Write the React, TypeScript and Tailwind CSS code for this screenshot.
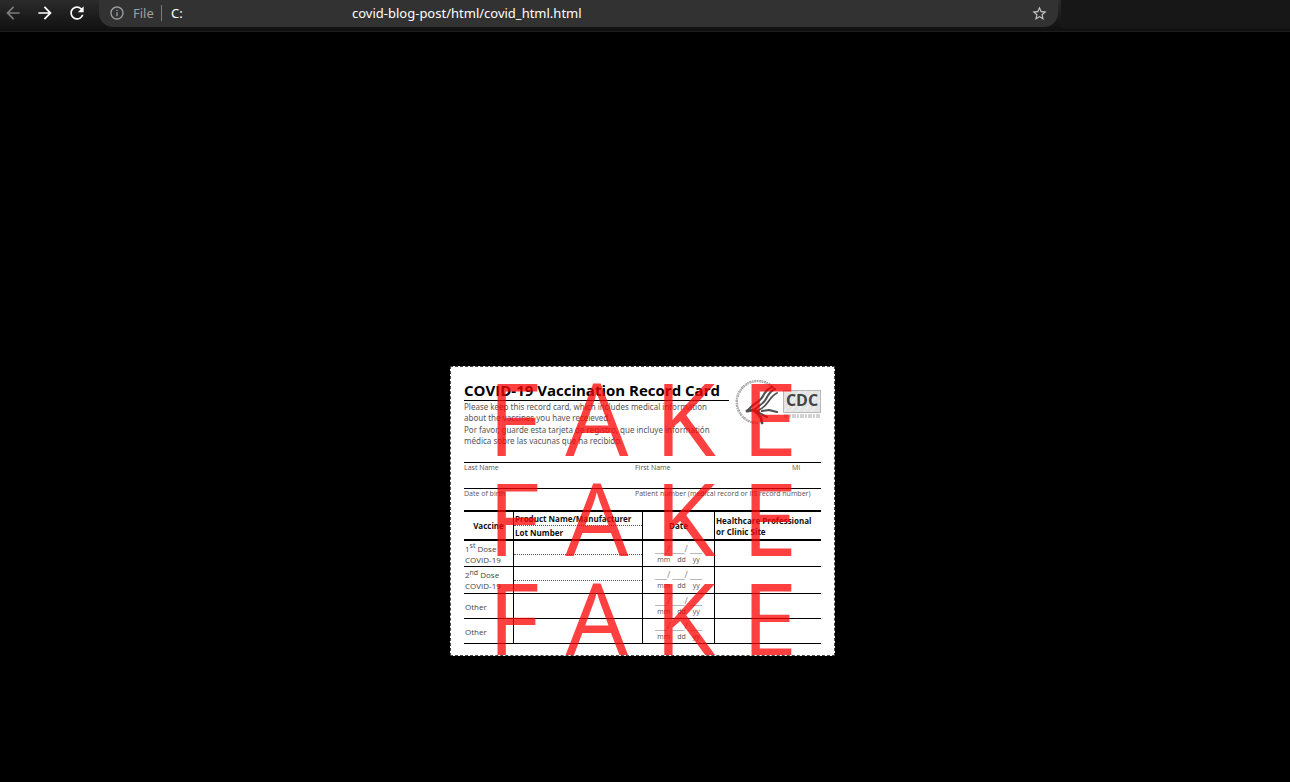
import React from "react";
import { MdArrowBack, MdArrowForward, MdRefresh, MdOutlineInfo, MdStarBorder } from "react-icons/md";

function Toolbar() {
  return (
    <header className="flex h-8 items-start border-b border-[#1c1c1c] bg-linear-to-b from-[#2b2b2b] to-[#101010]">
      <div className="flex h-[27px] w-[99px] shrink-0 items-center gap-3 pb-px pl-[3px]">
        <button type="button" aria-label="Back" className="text-[#7c7c7c]">
          <MdArrowBack size={20} />
        </button>
        <button type="button" aria-label="Forward" className="text-white">
          <MdArrowForward size={20} />
        </button>
        <button type="button" aria-label="Reload" className="text-white">
          <MdRefresh size={20} />
        </button>
      </div>
      <div className="flex h-[27px] flex-1 items-center rounded-b-[14px] bg-[#323232] px-2.5 pb-px font-['Noto_Sans',sans-serif] text-[13px] leading-5">
        <MdOutlineInfo size={16} className="text-[#9aa0a6]" />
        <span className="ml-2 w-6 text-[#9aa0a6]">File</span>
        <span className="mx-1 h-4 w-px bg-[#7c7c7c]" />
        <label htmlFor="address" className="ml-[5px] w-[181px] text-white">C:</label>
        <input
          id="address"
          type="text"
          defaultValue="covid-blog-post/html/covid_html.html"
          className="h-5 min-w-0 flex-1 bg-transparent text-white outline-none"
        />
        <button type="button" aria-label="Bookmark this page" className="text-[#c8c8c8]">
          <MdStarBorder size={17} />
        </button>
      </div>
      <div className="ml-[3px] h-[28px] w-[229px] shrink-0 bg-[#171717]" />
    </header>
  );
}

function AgencyLogo() {
  return (
    <svg viewBox="0 0 88 46" className="h-[46px] w-[88px] shrink-0" role="img" aria-label="CDC">
      <path d="M42 10A21 21 0 1 0 25 43" fill="none" stroke="#969696" strokeWidth="2.4" strokeDasharray="1.3 0.7 2 0.9" />
      <path d="M42 10A21 21 0 1 0 25 43" fill="none" stroke="#c8c8c8" strokeWidth="1" />
      <g fill="none" stroke="#505050" strokeLinecap="round" strokeLinejoin="round">
        <path d="M39 7C34 9 32 12 30 16S25 22 19 26L15 30" strokeWidth="2.2" />
        <path d="M42 9C37 11 35 15 33 19S27 25 22 29" strokeWidth="2" />
        <path d="M44 13C40 15 37 19 35 22S30 28 26 30" strokeWidth="1.8" />
        <path d="M14 31L20 30L25 34L28 38L29 43" strokeWidth="2.8" />
        <path d="M23 30L28 34L34 37M29 31L36 30L44 32" strokeWidth="2.2" />
      </g>
      <rect x="50.5" y="10.5" width="37" height="22" fill="#e4e4e4" stroke="#b8b8b8" />
      <path d="M51 32L67 11M57 32L73 11M64 32L80 11M71 32L86 13M78 32L87 20" stroke="#f6f6f6" />
      <text x="69" y="26" textAnchor="middle" fill="#444" fontFamily="Open Sans, sans-serif" fontSize="16" fontWeight="700">CDC</text>
      <path d="M51 35H88M51 37H88" stroke="#a5a5a5" strokeDasharray="4 1 2 1" />
    </svg>
  );
}

function DateCell() {
  return (
    <td className="border-r border-b border-black p-0 text-center align-middle text-[7px] leading-[11px] text-[#555]">
      <div className="text-[9px] leading-[11px] text-[#888]">___/ ___/ ___</div>
      <div className="flex justify-center gap-[7px]">
        <span>mm</span>
        <span>dd</span>
        <span>yy</span>
      </div>
    </td>
  );
}

function DoseRow({ label, height, split }: { label: React.ReactNode; height: string; split: boolean }) {
  return (
    <tr className={height}>
      <td className="border-r border-b border-black p-0 pl-px align-middle">{label}</td>
      <td className="border-r border-b border-black p-0 align-top">
        {split && <div className="h-3.5 border-b border-dotted border-[#555]" />}
      </td>
      <DateCell />
      <td className="border-b border-black p-0" />
    </tr>
  );
}

function RecordTable() {
  return (
    <table className="w-full table-fixed border-separate border-spacing-0 border-t-2 border-black text-[8px] leading-[11px] text-[#444]">
      <colgroup>
        <col className="w-[50px]" />
        <col className="w-[129px]" />
        <col className="w-[72px]" />
        <col />
      </colgroup>
      <thead className="text-[#111]">
        <tr className="h-[29px]">
          <th className="border-r border-b-2 border-black p-0 font-bold">Vaccine</th>
          <th className="border-r border-b-2 border-black p-0 text-left align-top font-bold">
            <div className="h-3.5 border-b border-dotted border-[#555] pl-px leading-[14px]">Product Name/Manufacturer</div>
            <div className="pl-px leading-[13px]">Lot Number</div>
          </th>
          <th className="border-r border-b-2 border-black p-0 font-bold">Date</th>
          <th className="border-b-2 border-black p-0 pl-px text-left font-bold">
            Healthcare Professional
            <br />
            or Clinic Site
          </th>
        </tr>
      </thead>
      <tbody>
        <DoseRow height="h-[26px]" split label={<>1<sup className="text-[7px]">st</sup> Dose<br />COVID-19</>} />
        <DoseRow height="h-[27px]" split label={<>2<sup className="text-[7px]">nd</sup> Dose<br />COVID-19</>} />
        <DoseRow height="h-[25px]" split={false} label="Other" />
        <DoseRow height="h-[25px]" split={false} label="Other" />
      </tbody>
    </table>
  );
}

function RecordCard() {
  return (
    <article className="relative w-[385px] shrink-0 overflow-hidden border border-dashed border-[#444] bg-white px-[13px] pt-[13px] pb-[11px]">
      <div className="flex h-[82px] items-start gap-1">
        <div className="w-[265px] shrink-0">
          <h1 className="h-[21px] border-b border-black text-[15px] leading-[21px] font-bold whitespace-nowrap text-black">
            COVID-19 Vaccination Record Card
          </h1>
          <div className="flex flex-col gap-px font-['Noto_Sans',sans-serif] text-[8px] leading-[11px] whitespace-nowrap text-[#555]">
            <p>Please keep this record card, which includes medical information<br />about the vaccines you have receieved.</p>
            <p>Por favor, guarde esta tarjeta de registro, que incluye informatión<br />médica sobre las vacunas que ha recibido.</p>
          </div>
        </div>
        <AgencyLogo />
      </div>
      <div className="flex h-[26px] border-t border-black text-[7px] leading-[10px] text-[#555]">
        <span className="w-[171px]">Last Name</span>
        <span className="w-[157px]">First Name</span>
        <span>MI</span>
      </div>
      <div className="flex h-[22px] border-t border-black text-[7px] leading-[10px] whitespace-nowrap text-[#555]">
        <span className="w-[171px]">Date of birth</span>
        <span>Patient number (medical record or IIS record number)</span>
      </div>
      <RecordTable />
      <div className="absolute inset-0 text-center text-[100px] leading-[100px] whitespace-nowrap text-[#ff0000]/75">
        <div>F A K E</div>
        <div>F A K E</div>
        <div>F A K E</div>
      </div>
    </article>
  );
}

export default function App() {
  return (
    <div className="min-h-screen bg-black font-['Open_Sans',sans-serif]">
      <Toolbar />
      <main className="flex justify-center pt-[334px] pr-[5px]">
        <RecordCard />
      </main>
    </div>
  );
}
